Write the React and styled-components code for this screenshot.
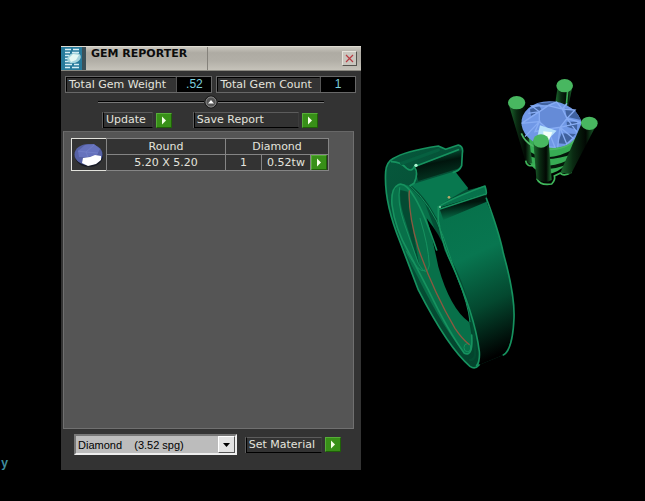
import { useState } from "react";
import styled, { createGlobalStyle } from "styled-components";

const GlobalStyle = createGlobalStyle`
  * {
    box-sizing: border-box;
  }
  body {
    margin: 0;
    background: #000;
    font-family: "DejaVu Sans", Verdana, sans-serif;
    font-size: 11px;
    line-height: 14px;
    color: #e4e4de;
  }
  button, select {
    font: inherit;
    color: inherit;
  }
`;

const Desktop = styled.main`
  display: flex;
  min-height: 100vh;
  background: #000;
`;

const Gutter = styled.aside`
  display: flex;
  flex: 0 0 61px;
  align-items: flex-end;
  padding: 0 0 30px 1px;
`;

const AxisLabel = styled.span`
  color: #3f8d9c;
  font-family: "Liberation Mono", monospace;
  font-size: 12px;
  font-weight: bold;
`;

const Panel = styled.section`
  display: flex;
  flex-direction: column;
  flex: 0 0 300px;
  margin: 46px 0 31px;
  background: #333;
`;

const TitleBar = styled.header`
  display: flex;
  height: 25px;
  background: linear-gradient(#c9c6bd, #aeaba3 25%, #b2afa7 60%, #c6c3ba);
  border-top: 1px solid #dedbd2;
  border-bottom: 1px solid #8a8880;
`;

const Title = styled.h1`
  flex: 0 0 122px;
  margin: 0;
  padding-left: 5px;
  border-right: 1px solid #85827b;
  color: #0c0c0c;
  font-size: 11px;
  line-height: 14px;
  white-space: nowrap;
`;

const CloseButton = styled.button`
  display: flex;
  align-items: center;
  justify-content: center;
  width: 15px;
  height: 15px;
  margin: 4px 4px 0 auto;
  padding: 0;
  background: #c9c6be;
  border: 1px solid #e6e4dc;
  border-right-color: #55534e;
  border-bottom-color: #55534e;
`;

const Totals = styled.dl`
  display: flex;
  gap: 4px;
  margin: 0;
  padding: 5px 5px 0 4px;
`;

const Total = styled.div`
  display: flex;
  flex: ${props => props.$grow} 1 0;
  height: 17px;
  border: 1px solid #686868;
`;

const TotalName = styled.dt`
  flex: 1;
  padding-left: 2px;
  border: 1px solid #333;
  border-left-color: #000;
  border-top-color: #000;
  line-height: 13px;
  white-space: nowrap;
`;

const TotalValue = styled.dd`
  flex: 0 0 35px;
  margin: 0;
  border-left: 1px solid #555;
  background: #000;
  color: #7ccfdc;
  font-family: "Liberation Sans", Arial, sans-serif;
  font-size: 12px;
  line-height: 15px;
  text-align: center;
`;

const Separator = styled.div`
  display: flex;
  align-items: center;
  margin: 2px 37px 0;
  height: 14px;
`;

const Line = styled.span`
  flex: 1;
  height: 2px;
  background: #000;
  border-bottom: 1px solid #777;
`;

const CollapseButton = styled.button`
  display: flex;
  width: 14px;
  height: 14px;
  padding: 0;
  border: 0;
  background: none;
`;

const Actions = styled.div`
  display: flex;
  gap: 22px;
  padding: 3px 43px 3px 42px;
`;

const Action = styled.button`
  display: flex;
  gap: 3px;
  align-items: center;
  flex: ${props => props.$grow || 0} 0 auto;
  padding: 0;
  border: 0;
  background: none;
  text-align: left;
`;

const ActionLabel = styled.span`
  flex: 1;
  height: 16px;
  padding: 0 6px 0 2px;
  border: 1px solid #000;
  border-top-color: #5c5c5c;
  border-right-color: #3c3c3c;
  box-shadow: -1px 0 #5c5c5c;
  white-space: nowrap;
`;

const Arrow = styled.span`
  display: flex;
  align-items: center;
  justify-content: center;
  width: 16px;
  height: 15px;
  background: #389018;
  border: 1px solid #56ad38;
  border-right-color: #1f6008;
  border-bottom-color: #1f6008;
`;

const GemList = styled.div`
  display: flex;
  flex: 1;
  align-items: flex-start;
  margin: 0 7px 0 2px;
  padding: 6px 7px;
  background: #555;
  border: 1px solid #707070;
  border-top-color: #676767;
`;

const Thumb = styled.div`
  width: 36px;
  height: 33px;
  border: 1px solid #e2e2dc;
  background: #333;
`;

const GemTable = styled.table`
  width: 222px;
  height: 33px;
  margin-left: -1px;
  border-collapse: collapse;
  table-layout: fixed;
  background: #333;
`;

const Cell = styled.td`
  height: 16px;
  padding: 0;
  border: 1px solid #858585;
  font-weight: normal;
  line-height: 14px;
  text-align: center;
`;

const ArrowCell = styled(Cell)`
  border-left: 0;
`;

const RowButton = styled.button`
  display: block;
  padding: 0;
  border: 0;
  background: none;
`;

const Footer = styled.footer`
  display: flex;
  align-items: center;
  gap: 9px;
  padding: 5px 20px 15px 13px;
`;

const SelectBox = styled.div`
  position: relative;
  flex: 1;
  height: 21px;
  border: 2px solid #eee;
  border-top-color: #777;
  border-left-color: #777;
`;

const MaterialSelect = styled.select`
  appearance: none;
  display: block;
  width: 100%;
  height: 17px;
  padding: 0 18px 0 2px;
  border: 0;
  border-radius: 0;
  background: #bcbcbc;
  color: #000;
  font-family: "Liberation Sans", Arial, sans-serif;
  font-size: 11px;
`;

const SelectArrow = styled.span`
  position: absolute;
  top: 0;
  right: 0;
  display: flex;
  align-items: center;
  justify-content: center;
  width: 17px;
  height: 17px;
  background: #e4e4e4;
  border: 1px solid #fff;
  border-right-color: #555;
  border-bottom-color: #555;
  pointer-events: none;
`;

const Scene = styled.svg`
  flex: 1 1 0;
  min-width: 0;
  align-self: flex-start;
`;

function GreenArrow() {
  return (
    <Arrow>
      <svg width="6" height="9" viewBox="0 0 6 9">
        <path d="M1 0.5v8l4-4z" fill="#f6ffe8" />
      </svg>
    </Arrow>
  );
}

function ActionButton({ children, grow }) {
  return (
    <Action type="button" $grow={grow}>
      <ActionLabel>{children}</ActionLabel>
      <GreenArrow />
    </Action>
  );
}

function AppIcon() {
  return (
    <svg width="25" height="23" viewBox="0 0 25 23">
      <path d="M0 0h25v23H0z" fill="#267a9b" />
      <path d="M21 0h4v23h-4z" fill="#3b5058" />
      <path
        d="M4 2.5h6m2 0h6M4 5.5h5m2 0h7M4 8.5h4M4 11.5h3M4 14.5h4M4 17.5h7m2 0h5M4 20.5h5m2 0h7"
        stroke="#d5eef5"
        strokeWidth="1.4"
      />
      <ellipse cx="13" cy="11" rx="7" ry="5" fill="#a4d4dd" transform="rotate(-18 13 11)" />
      <path d="M8 11l4-4 6 1-3 5-5 2z" fill="#e4f8f4" />
    </svg>
  );
}

function GemThumb() {
  return (
    <svg width="34" height="31" viewBox="0 0 34 31">
      <ellipse cx="17" cy="17" rx="14" ry="11" fill="#191c25" />
      <ellipse cx="16.5" cy="15.5" rx="14" ry="10.5" fill="#5661a4" />
      <path d="M6 12l7-6 9-1 6 5-3 6-10 2-8 0z" fill="#6672bd" />
      <path d="M6 12l8 1 8-7m-8 7l2 5m-2-5l12 1" stroke="#7682ca" strokeWidth="0.7" fill="none" />
      <path d="M11 19l7-1 5-2 6 1 0 4-5 4-8 2-6-3z" fill="#fff" />
    </svg>
  );
}

function Ring() {
  return (
    <g transform="translate(375 135) scale(0.3333)" strokeLinejoin="round" strokeLinecap="round">
      {/* far side of the band */}
      <path
        d="M32 110Q34 82 52 72Q90 48 190 33L212 43L250 30Q264 34 262 50L260 92Q256 108 238 110L280 165L330 152Q336 170 334 200Q372 290 385 355Q420 480 417 550Q413 640 385 660L312 690Q300 705 285 694Q220 640 130 465L75 320Q26 200 32 110Z"
        fill="url(#band)"
      />
      <path d="M150 205Q120 145 75 147Q45 165 52 220Q65 310 130 430Q210 590 270 655Q292 660 291 610L282 555Z" fill="#087049" />
      {/* opening */}
      <path d="M155 250Q195 300 214 350Q260 430 280 510L283 562Q225 520 190 395Q168 290 155 250Z" fill="#000" />
      <path d="M76 165Q72 205 92 260L135 400Q110 270 98 170Z" fill="#034b32" />
      {/* shoulders */}
      <path d="M118 95L250 48L262 45L258 98L130 138Z" fill="url(#shoulder)" />
      <path d="M105 150L240 109L280 160L190 212L190 255Z" fill="#08784f" />
      <path d="M190 215Q230 190 330 153L336 205Q370 280 385 355Q420 480 417 550Q413 630 385 660L312 690Q318 570 215 350Q190 280 190 215Z" fill="url(#front)" />
      <path d="M193 218L335 175L335 200L205 255Z" fill="url(#lip)" />
      <path d="M108 155Q185 220 212 345L245 415Q300 540 300 660Q298 675 285 675" fill="none" stroke="#034c31" strokeWidth="7" />
      <g fill="none" stroke="#16925f" strokeWidth="5">
        <path d="M312 690Q300 705 285 694Q220 640 130 465L75 320Q26 200 32 110Q34 82 52 72Q90 48 190 33L212 43L250 30Q266 34 262 55L260 92Q254 108 235 112" />
        <path d="M50 80Q75 80 95 100Q110 112 118 95L250 44" />
        <path d="M118 95Q132 115 117 145L105 152" />
        <path d="M190 255V215Q235 188 330 153Q338 180 330 178L195 222" />
        <path d="M334 190Q372 290 385 355Q420 480 417 550Q413 645 385 660" />
        <path d="M190 255Q200 320 225 375Q300 540 313 650Q315 680 305 692" />
        <path d="M185 345Q112 130 70 149Q47 160 51 210Q60 280 100 350L160 465Q220 590 268 655Q295 667 290 600" />
        <path d="M74 158Q66 200 86 260L130 385Q155 430 163 390Q160 330 135 250" strokeWidth="3" />
        <path d="M105 152Q170 210 203 300L248 430Q280 510 285 560" strokeWidth="3" />
        <path d="M95 350Q135 420 150 405" strokeWidth="3" />
        <ellipse cx="277" cy="638" rx="10" ry="12" strokeWidth="3" />
      </g>
      <path d="M103 168Q99 235 130 340Q175 470 240 580Q260 610 282 628" fill="none" stroke="#8c5840" strokeWidth="4" />
      <path d="M80 85L190 45" stroke="#066040" strokeWidth="10" />
      <circle cx="123" cy="91" r="5" fill="#adf7d2" />
      <circle cx="222" cy="187" r="4" fill="#b9a86a" />
      <circle cx="195" cy="216" r="3" fill="#8fe0b6" />
    </g>
  );
}

function Prongs() {
  return (
    <g transform="translate(495 70) scale(0.3333)">
      <path d="M188 50L232 50L220 110L180 105Z" fill="url(#prong)" />
      <path d="M218 60L214 108" stroke="#3aad55" strokeWidth="5" />
      <path d="M78 190Q90 310 160 312Q225 300 246 215Z" fill="#37ad54" />
      <path d="M92 235Q150 290 244 232L240 250Q160 280 100 258Z" fill="#04160a" />
      <path d="M160 292Q205 288 230 268" stroke="#06190b" strokeWidth="10" fill="none" />
      <path d="M41 103L89 105L112 280L94 282Z" fill="url(#prong)" />
      <path d="M92 272Q94 292 120 286M195 307Q204 323 230 306M125 325Q135 348 170 342Q182 330 178 318L195 310" fill="none" stroke="#3fb65a" strokeWidth="5" />
      <ellipse cx="170" cy="163" rx="91" ry="69" fill="#7098e6" transform="rotate(8 170 163)" />
      <path d="M210 115L240 120L258 150L215 140ZM215 155L247 155L246 180L216 170ZM200 190L242 192L215 222L188 220ZM105 118L133 107L140 120L108 138ZM125 100L178 96L150 108Z" fill="#40629f" />
      <path d="M133 125L160 107L202 117L216 145L195 172L158 177L133 155Z" fill="#658bd7" />
      <path
        d="M133 125L80 160L133 155L90 200M133 125L110 108L160 107L185 96L202 117L240 120L216 145L258 158L195 172L235 205L215 222L195 172L158 177L180 232L150 230L158 177L120 185L133 155L133 125L160 107L202 117L216 145L195 172L158 177L133 155M202 117L216 100M216 145L248 190M195 172L188 232M100 130L133 125"
        fill="none"
        stroke="#88adf4"
        strokeWidth="4"
      />
      <path d="M135 166L185 182L160 208L128 196Z" fill="#b8e2fb" />
      <path d="M145 184L172 187L160 215L145 205Z" fill="#f3fff8" />
      <path d="M79 190Q100 240 170 238Q225 235 247 200" fill="none" stroke="#4eb767" strokeWidth="5" />
      <path d="M260 160L305 163L228 312L196 308Z" fill="url(#prong)" />
      <path d="M115 212H161L170 330Q148 344 124 326Z" fill="url(#prong)" />
      <g fill="#48b760">
        <ellipse cx="65" cy="98" rx="26" ry="20" />
        <ellipse cx="209" cy="47" rx="25" ry="20" />
        <ellipse cx="283" cy="160" rx="25" ry="20" />
        <ellipse cx="138" cy="213" rx="24" ry="20" />
      </g>
    </g>
  );
}

function Model() {
  return (
    <Scene viewBox="361 0 284 501" preserveAspectRatio="xMinYMin meet" role="img" aria-label="Ring and stone model">
      <defs>
        <linearGradient id="band" x1="0" y1="0" x2="1" y2="1">
          <stop offset="0" stopColor="#06583c" />
          <stop offset="1" stopColor="#03402a" />
        </linearGradient>
        <linearGradient id="shoulder" x1="0" y1="0" x2="0.3" y2="1">
          <stop offset="0" stopColor="#087650" />
          <stop offset="0.5" stopColor="#01150d" />
          <stop offset="1" stopColor="#043522" />
        </linearGradient>
        <linearGradient id="front" x1="0.3" y1="0" x2="0.5" y2="1">
          <stop offset="0" stopColor="#067049" />
          <stop offset="0.4" stopColor="#087650" />
          <stop offset="0.7" stopColor="#04482f" />
          <stop offset="1" stopColor="#000" />
        </linearGradient>
        <linearGradient id="lip" x1="0" y1="0" x2="0.2" y2="1">
          <stop offset="0" stopColor="#01150d" />
          <stop offset="0.45" stopColor="#01150d" />
          <stop offset="1" stopColor="#067049" />
        </linearGradient>
        <linearGradient id="prong" x1="0" y1="0" x2="1" y2="0">
          <stop offset="0" stopColor="#1d6c30" />
          <stop offset="0.35" stopColor="#0a2a12" />
          <stop offset="0.7" stopColor="#020803" />
          <stop offset="1" stopColor="#1f7334" />
        </linearGradient>
      </defs>
      <Ring />
      <Prongs />
    </Scene>
  );
}

export default function App() {
  const [material, setMaterial] = useState("diamond");
  return (
    <Desktop>
      <GlobalStyle />
      <Gutter>
        <AxisLabel>y</AxisLabel>
      </Gutter>
      <Panel>
        <TitleBar>
          <AppIcon />
          <Title>GEM REPORTER</Title>
          <CloseButton type="button" aria-label="Close">
            <svg width="9" height="9" viewBox="0 0 9 9">
              <path d="M1 1l7 7M8 1l-7 7" stroke="#b93a42" strokeWidth="1.2" />
            </svg>
          </CloseButton>
        </TitleBar>
        <Totals>
          <Total $grow={148}>
            <TotalName>Total Gem Weight</TotalName>
            <TotalValue>.52</TotalValue>
          </Total>
          <Total $grow={140}>
            <TotalName>Total Gem Count</TotalName>
            <TotalValue>1</TotalValue>
          </Total>
        </Totals>
        <Separator>
          <Line />
          <CollapseButton type="button" aria-label="Collapse">
            <svg width="14" height="14" viewBox="0 0 14 14">
              <circle cx="7" cy="7" r="6" fill="#555" stroke="#111" />
              <circle cx="7" cy="7" r="5" fill="none" stroke="#888" />
              <path d="M4 8.5h6L7 5z" fill="#fff" />
            </svg>
          </CollapseButton>
          <Line />
        </Separator>
        <Actions>
          <ActionButton>Update</ActionButton>
          <ActionButton grow={1}>Save Report</ActionButton>
        </Actions>
        <GemList>
          <Thumb>
            <GemThumb />
          </Thumb>
          <GemTable>
            <colgroup>
              <col width="119" />
              <col width="36" />
              <col width="49" />
              <col width="18" />
            </colgroup>
            <thead>
              <tr>
                <Cell as="th">Round</Cell>
                <Cell as="th" colSpan={3}>Diamond</Cell>
              </tr>
            </thead>
            <tbody>
              <tr>
                <Cell>5.20 X 5.20</Cell>
                <Cell>1</Cell>
                <Cell>0.52tw</Cell>
                <ArrowCell>
                  <RowButton type="button" aria-label="Select gem">
                    <GreenArrow />
                  </RowButton>
                </ArrowCell>
              </tr>
            </tbody>
          </GemTable>
        </GemList>
        <Footer>
          <SelectBox>
            <MaterialSelect aria-label="Material" value={material} onChange={e => setMaterial(e.target.value)}>
              <option value="diamond">Diamond{"\u00a0\u00a0\u00a0\u00a0"}(3.52 spg)</option>
            </MaterialSelect>
            <SelectArrow>
              <svg width="7" height="4" viewBox="0 0 7 4">
                <path d="M0 0h7L3.5 4z" fill="#000" />
              </svg>
            </SelectArrow>
          </SelectBox>
          <ActionButton>Set Material</ActionButton>
        </Footer>
      </Panel>
      <Model />
    </Desktop>
  );
}
